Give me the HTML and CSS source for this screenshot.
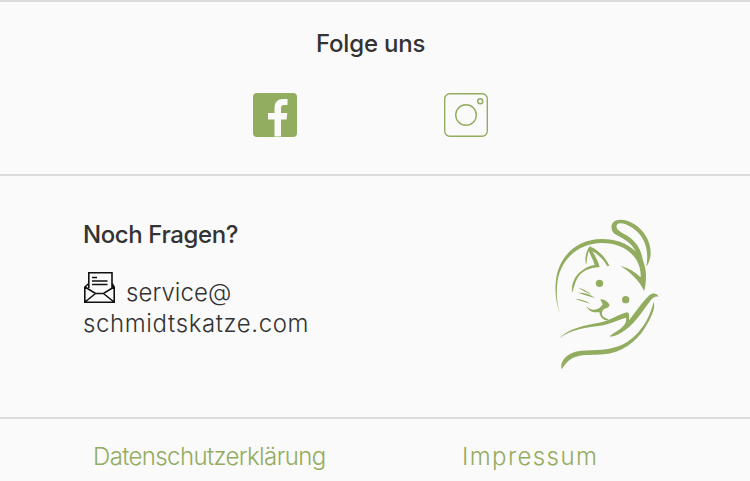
FILE: index.html
```html
<!DOCTYPE html>
<html lang="de">
<head>
<meta charset="utf-8">
<title>Schmidts Katze</title>
<link rel="stylesheet" href="styles.css">
</head>
<body>
<footer>
  <section class="social">
    <h2><span class="t-follow">Folge uns</span></h2>
    <div class="social-links">
      <svg class="facebook" viewBox="0 0 44 44"><rect width="44" height="44" rx="4"/><path class="letter" d="M21.5 43.500V26.500H15V20H21.500V15C21.500 9 25 6 30 6H34.500V12H31.500C28.500 12 28 13.500 28 16V20H34.300L33.500 26.500H28V43.500Z"/></svg>
      <svg class="instagram" viewBox="0 0 44 44"><rect x=".7" y=".7" width="42.6" height="42.6" rx="5"/><circle cx="22" cy="22" r="10.3"/><circle cx="36.2" cy="8.2" r="2.5"/></svg>
    </div>
  </section>
  <section class="contact">
    <div class="questions">
      <h2><span class="t-questions">Noch Fragen?</span></h2>
      <p><svg class="mail" viewBox="0 0 31 31"><path d="M4.8 16V.8H28V16M4.8 11.5L.8 15V30.2H30.2V15L28 11.5M1 15L11.5 21.5H19.5L30 15M1 30L11.5 21.5M30 30L19.5 21.5M8 5.500H13M8 9H23.500M8 12.500H23.500"/></svg><span class="t-user">service@</span><br><span class="t-domain">schmidtskatze.com</span></p>
    </div>
    <svg class="cat" viewBox="0 0 390 495">
      <path d="M60 311C47 277 44 244 48 210C57 137 112 87 185 87C226 87 261 99 287 124C275 101 254 88 231 76C213 67 211 49 218 39C229 24 259 28 282 42C314 62 334 96 332 135C330 150 325 162 319 170C327 126 318 80 277 53C258 41 235 34 230 46C227 57 240 64 251 71C283 88 301 111 307 143C310 158 318 170 318 197C318 215 316 233 312 243C306 229 299 219 289 208C276 192 261 180 241 167C265 174 285 185 302 202C303 184 299 168 290 151C269 116 230 99 185 99C119 99 65 144 53 211C48 246 50 278 60 311Z"/>
      <path d="M96 249C94 229 99 211 109 198C123 180 143 168 164 165C160 150 152 137 146 123C142 137 140 150 139 166C133 149 137 125 149 109C174 119 196 141 208 167L202 169C190 148 175 133 157 124C166 139 174 151 179 171C148 173 126 183 113 203C104 218 102 234 96 249Z"/>
      <circle cx="178.500" cy="220" r="11"/><circle cx="257" cy="269" r="11"/>
      <path d="M114 233Q137 238 155 255Q134 245 114 233ZM113 248Q143 247 166 264Q139 257 113 248ZM105 267Q129 267 151 281Q128 275 105 267Z"/>
      <path d="M181 268C190 266 206 276 209 286C206 291 202 295 194 296C184 301 183 314 192 322C197 326 203 325 206 330C193 333 180 324 178 306C164 308 149 308 138 288C147 297 158 302 172 297C179 295 185 289 188 283C185 277 183 273 181 268Z"/>
      <path d="M57 386C85 355 132 346 177 338C211 332 236 313 260 307C269 307 268 319 267 331C288 306 305 277 328 256C338 247 350 249 356 260C342 258 335 267 329 275C303 309 279 349 242 369C229 377 218 381 208 379C225 365 252 354 258 335C259 330 259 325 257 323C231 331 210 343 180 347C136 353 92 358 57 386Z"/>
      <path d="M341 276C348 293 332 326 317 350C289 398 242 428 190 433C161 436 134 433 109 440C87 446 77 460 65 478C60 460 71 445 84 436C115 414 158 425 203 417C234 412 257 402 280 382C314 351 330 317 341 276Z"/>
    </svg>
  </section>
  <nav>
    <a class="t-privacy">Datenschutzerklärung</a>
    <a class="t-imprint">Impressum</a>
  </nav>
</footer>
</body>
</html>
```
FILE: styles.css
```css
* { box-sizing: border-box; }
body { margin: 0; background: #fafafa; color: #333; font: 300 24px/31px Inter, sans-serif; }
footer { height: 481px; overflow: hidden; }
h2 { margin: 0; font-size: 24px; line-height: 31px; font-weight: 500; }
section, nav { border-top: 2px solid #dcdcdc; }
.social { height: 174px; padding-top: 26px; }
.social h2 { padding-left: 316px; }
.social-links { display: flex; gap: 147.5px; padding: 34px 0 0 252.5px; }
.facebook, .instagram { width: 44px; height: 44px; fill: #92ac60; }
.facebook .letter { fill: #fafafa; }
.instagram { fill: none; stroke: #92ac60; stroke-width: 1.4; }
.contact { display: flex; justify-content: space-between; height: 243px; padding: 34px 80px 0 83px; }
.questions h2 { padding-top: 9px; }
.questions p { margin: 22px 0 0; white-space: nowrap; }
.mail { width: 31px; height: 31px; margin: 0 11px 0 1px; vertical-align: -2px; fill: none; stroke: #111; stroke-width: 1.6; }
.cat { width: 130px; height: 165px; fill: #92ac60; }
nav { display: grid; grid-template-columns: 369px auto; padding: 22px 0 0 93px; color: #92ac60; }
.t-follow { letter-spacing: -0.2px; }
.t-questions { letter-spacing: -0.4px; }
.t-user { letter-spacing: 0.05px; }
.t-domain { letter-spacing: 0.62px; }
.t-privacy { letter-spacing: -0.62px; }
.t-imprint { letter-spacing: 1.4px; }
```
